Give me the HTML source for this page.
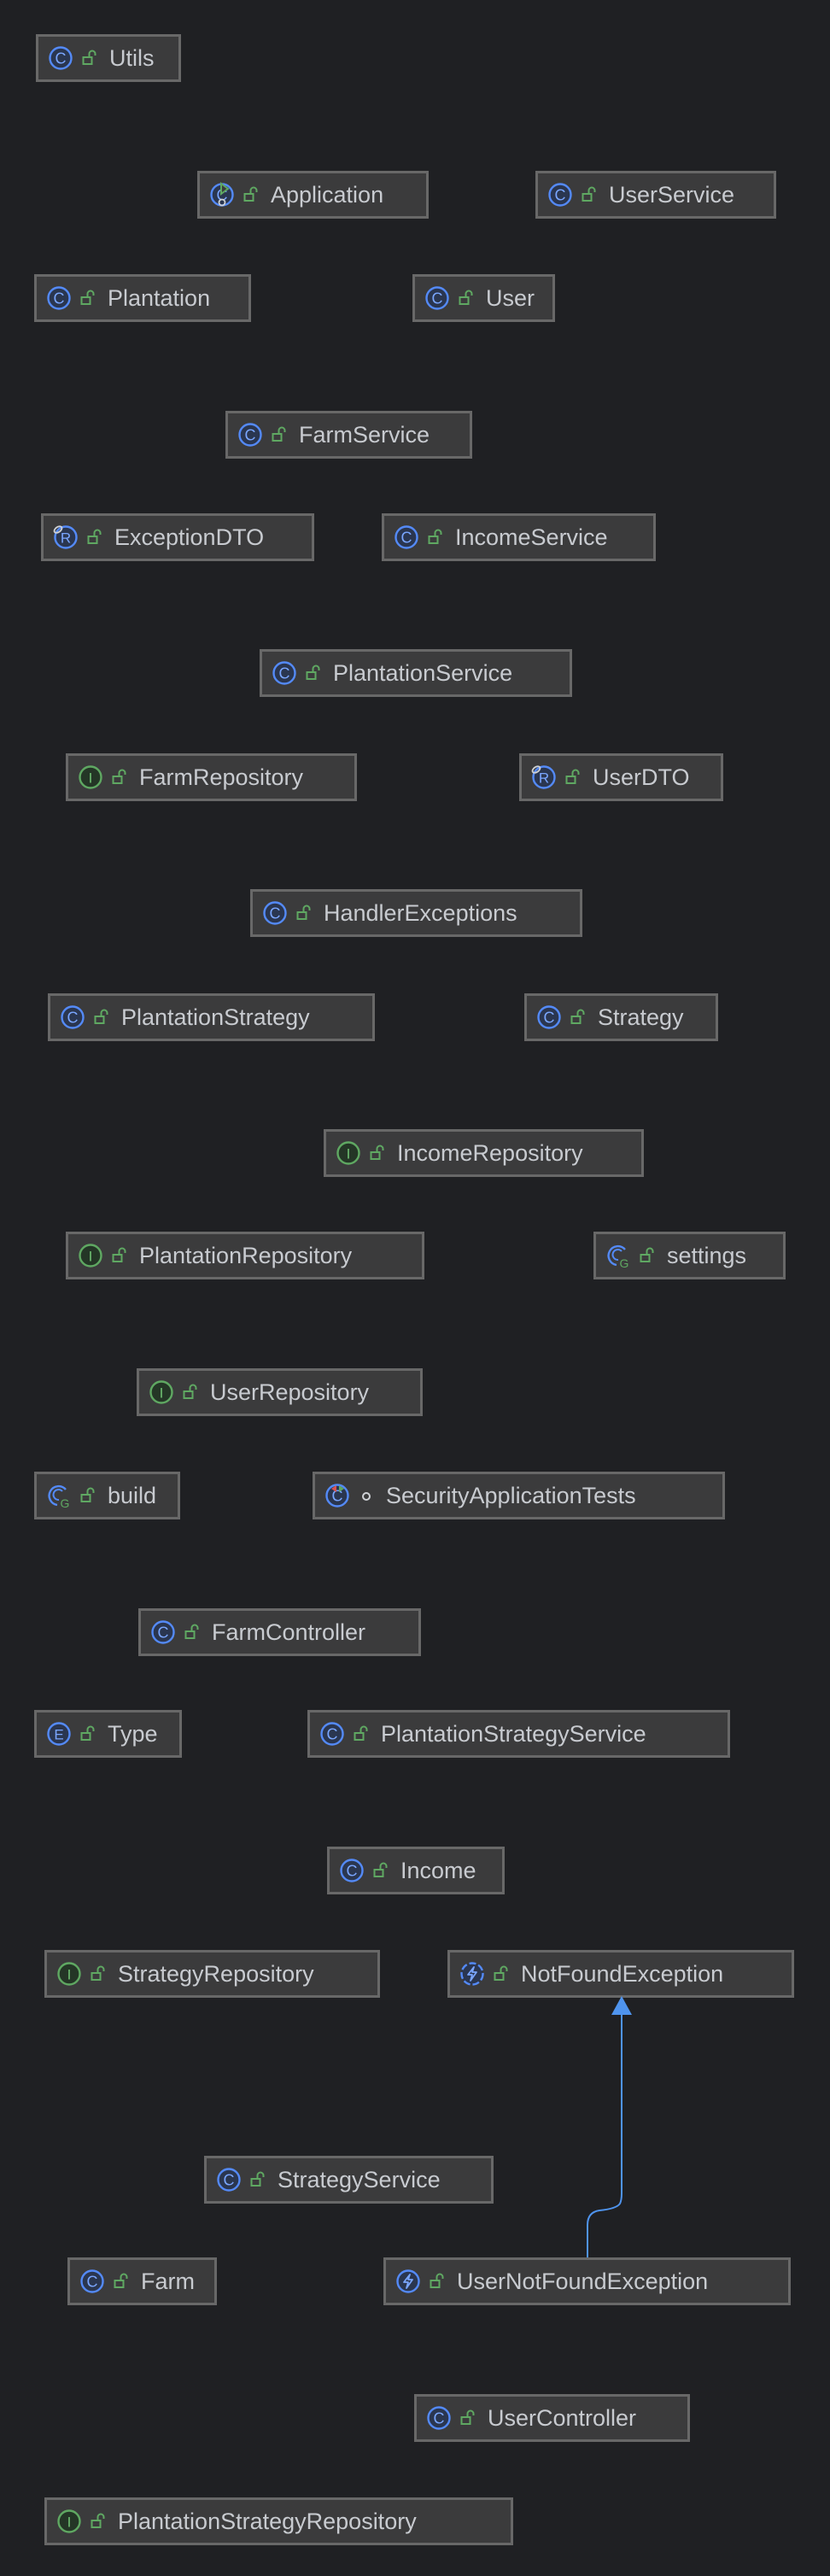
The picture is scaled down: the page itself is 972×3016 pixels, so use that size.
<!DOCTYPE html>
<html><head><meta charset="utf-8"><style>
html,body{margin:0;padding:0;background:#1f2023;width:972px;height:3016px;overflow:hidden;position:relative;font-family:"Liberation Sans",sans-serif}
.b{position:absolute;height:50px;background:#3b3b3c;border:3px solid #686868;box-sizing:content-box;display:flex;align-items:center;color:#c8cbd0;font-size:27px;white-space:nowrap}
.b svg.ic{margin-left:11px;width:30px;height:30px;flex:none}
.b svg.lk{margin-left:10px;width:18px;height:20px;flex:none}
.b span{margin-left:14px}
</style></head><body>
<svg width="0" height="0" style="position:absolute">
<defs>
<g id="c"><circle cx="15" cy="15" r="12.5" fill="#2a3650" stroke="#548af7" stroke-width="2.4"/><text x="15" y="21.5" text-anchor="middle" font-family="Liberation Sans" font-size="18" fill="#7aa6ff">C</text></g>
<g id="i"><circle cx="15" cy="15" r="12.5" fill="#243626" stroke="#5fa862" stroke-width="2.4"/><text x="15" y="21.5" text-anchor="middle" font-family="Liberation Sans" font-size="17" fill="#6fbf72">I</text></g>
<g id="e"><circle cx="15" cy="15" r="12.5" fill="#2a3650" stroke="#548af7" stroke-width="2.4"/><text x="15" y="21.5" text-anchor="middle" font-family="Liberation Sans" font-size="17" fill="#7aa6ff">E</text></g>
<g id="r"><circle cx="15" cy="15" r="12.5" fill="#2a3650" stroke="#548af7" stroke-width="2.4"/><text x="15" y="21.5" text-anchor="middle" font-family="Liberation Sans" font-size="17" fill="#7aa6ff">R</text><ellipse cx="6" cy="6" rx="5" ry="3" transform="rotate(-35 6 6)" fill="none" stroke="#cfd2d6" stroke-width="1.8"/></g>
<g id="x"><circle cx="15" cy="15" r="12.5" fill="#2a3650" stroke="#548af7" stroke-width="2.4"/><path d="M17 7 L10 16 H15 L13 23 L20 13 H15 Z" fill="none" stroke="#7aa6ff" stroke-width="1.8" stroke-linejoin="round"/></g>
<g id="xd"><circle cx="15" cy="15" r="12.5" fill="#2a3650" stroke="#548af7" stroke-width="2.4" stroke-dasharray="8 3"/><path d="M17 7 L10 16 H15 L13 23 L20 13 H15 Z" fill="none" stroke="#7aa6ff" stroke-width="1.8" stroke-linejoin="round"/></g>
<g id="g"><path d="M23 8 A11 11 0 1 0 13 26" fill="none" stroke="#548af7" stroke-width="2.4"/><path d="M19 10 A6 6 0 1 0 15 20" fill="none" stroke="#548af7" stroke-width="2"/><text x="22" y="29" text-anchor="middle" font-family="Liberation Sans" font-size="14" fill="#5fa862">G</text></g>
<g id="a"><use href="#c"/><path d="M14 2 L22 8 L14 14 Z" fill="#3b3b3c" stroke="#5fa862" stroke-width="2"/><circle cx="15" cy="24" r="3.5" fill="none" stroke="#cfd2d6" stroke-width="1.8"/></g>
<g id="t"><use href="#c"/><path d="M14 3 L8 7 L14 11 Z" fill="#d9534f"/><path d="M17 3 L23 7 L17 11 Z" fill="#5fa862"/></g>
<g id="l"><rect x="1.5" y="9" width="10" height="8" fill="none" stroke="#5fa862" stroke-width="2"/><path d="M8.5 9 V5 A3.5 3.5 0 0 1 15.5 5 V7" fill="none" stroke="#5fa862" stroke-width="2"/></g>
<g id="o"><circle cx="9" cy="11" r="4" fill="none" stroke="#cfd2d6" stroke-width="2"/></g>
</defs></svg>

<div class="b" style="left:42px;top:40px;width:164px"><svg class="ic"><use href="#c"/></svg><svg class="lk"><use href="#l"/></svg><span>Utils</span></div>
<div class="b" style="left:231px;top:200px;width:265px"><svg class="ic"><use href="#a"/></svg><svg class="lk"><use href="#l"/></svg><span>Application</span></div>
<div class="b" style="left:627px;top:200px;width:276px"><svg class="ic"><use href="#c"/></svg><svg class="lk"><use href="#l"/></svg><span>UserService</span></div>
<div class="b" style="left:40px;top:321px;width:248px"><svg class="ic"><use href="#c"/></svg><svg class="lk"><use href="#l"/></svg><span>Plantation</span></div>
<div class="b" style="left:483px;top:321px;width:161px"><svg class="ic"><use href="#c"/></svg><svg class="lk"><use href="#l"/></svg><span>User</span></div>
<div class="b" style="left:264px;top:481px;width:283px"><svg class="ic"><use href="#c"/></svg><svg class="lk"><use href="#l"/></svg><span>FarmService</span></div>
<div class="b" style="left:48px;top:601px;width:314px"><svg class="ic"><use href="#r"/></svg><svg class="lk"><use href="#l"/></svg><span>ExceptionDTO</span></div>
<div class="b" style="left:447px;top:601px;width:315px"><svg class="ic"><use href="#c"/></svg><svg class="lk"><use href="#l"/></svg><span>IncomeService</span></div>
<div class="b" style="left:304px;top:760px;width:360px"><svg class="ic"><use href="#c"/></svg><svg class="lk"><use href="#l"/></svg><span>PlantationService</span></div>
<div class="b" style="left:77px;top:882px;width:335px"><svg class="ic"><use href="#i"/></svg><svg class="lk"><use href="#l"/></svg><span>FarmRepository</span></div>
<div class="b" style="left:608px;top:882px;width:233px"><svg class="ic"><use href="#r"/></svg><svg class="lk"><use href="#l"/></svg><span>UserDTO</span></div>
<div class="b" style="left:293px;top:1041px;width:383px"><svg class="ic"><use href="#c"/></svg><svg class="lk"><use href="#l"/></svg><span>HandlerExceptions</span></div>
<div class="b" style="left:56px;top:1163px;width:377px"><svg class="ic"><use href="#c"/></svg><svg class="lk"><use href="#l"/></svg><span>PlantationStrategy</span></div>
<div class="b" style="left:614px;top:1163px;width:221px"><svg class="ic"><use href="#c"/></svg><svg class="lk"><use href="#l"/></svg><span>Strategy</span></div>
<div class="b" style="left:379px;top:1322px;width:369px"><svg class="ic"><use href="#i"/></svg><svg class="lk"><use href="#l"/></svg><span>IncomeRepository</span></div>
<div class="b" style="left:77px;top:1442px;width:414px"><svg class="ic"><use href="#i"/></svg><svg class="lk"><use href="#l"/></svg><span>PlantationRepository</span></div>
<div class="b" style="left:695px;top:1442px;width:219px"><svg class="ic"><use href="#g"/></svg><svg class="lk"><use href="#l"/></svg><span>settings</span></div>
<div class="b" style="left:160px;top:1602px;width:329px"><svg class="ic"><use href="#i"/></svg><svg class="lk"><use href="#l"/></svg><span>UserRepository</span></div>
<div class="b" style="left:40px;top:1723px;width:165px"><svg class="ic"><use href="#g"/></svg><svg class="lk"><use href="#l"/></svg><span>build</span></div>
<div class="b" style="left:366px;top:1723px;width:477px"><svg class="ic"><use href="#t"/></svg><svg class="lk"><use href="#o"/></svg><span>SecurityApplicationTests</span></div>
<div class="b" style="left:162px;top:1883px;width:325px"><svg class="ic"><use href="#c"/></svg><svg class="lk"><use href="#l"/></svg><span>FarmController</span></div>
<div class="b" style="left:40px;top:2002px;width:167px"><svg class="ic"><use href="#e"/></svg><svg class="lk"><use href="#l"/></svg><span>Type</span></div>
<div class="b" style="left:360px;top:2002px;width:489px"><svg class="ic"><use href="#c"/></svg><svg class="lk"><use href="#l"/></svg><span>PlantationStrategyService</span></div>
<div class="b" style="left:383px;top:2162px;width:202px"><svg class="ic"><use href="#c"/></svg><svg class="lk"><use href="#l"/></svg><span>Income</span></div>
<div class="b" style="left:52px;top:2283px;width:387px"><svg class="ic"><use href="#i"/></svg><svg class="lk"><use href="#l"/></svg><span>StrategyRepository</span></div>
<div class="b" style="left:524px;top:2283px;width:400px"><svg class="ic"><use href="#xd"/></svg><svg class="lk"><use href="#l"/></svg><span>NotFoundException</span></div>
<div class="b" style="left:239px;top:2524px;width:333px"><svg class="ic"><use href="#c"/></svg><svg class="lk"><use href="#l"/></svg><span>StrategyService</span></div>
<div class="b" style="left:79px;top:2643px;width:169px"><svg class="ic"><use href="#c"/></svg><svg class="lk"><use href="#l"/></svg><span>Farm</span></div>
<div class="b" style="left:449px;top:2643px;width:471px"><svg class="ic"><use href="#x"/></svg><svg class="lk"><use href="#l"/></svg><span>UserNotFoundException</span></div>
<div class="b" style="left:485px;top:2803px;width:317px"><svg class="ic"><use href="#c"/></svg><svg class="lk"><use href="#l"/></svg><span>UserController</span></div>
<div class="b" style="left:52px;top:2924px;width:543px"><svg class="ic"><use href="#i"/></svg><svg class="lk"><use href="#l"/></svg><span>PlantationStrategyRepository</span></div>

<svg style="position:absolute;left:0;top:0" width="972" height="3016">
<path d="M688 2643 V2605 Q688 2590 702 2588 Q722 2586 726 2580 Q728 2576 728 2568 V2358" fill="none" stroke="#4f94ee" stroke-width="2"/>
<path d="M728 2337 L740 2359 L716 2359 Z" fill="#4f94ee"/>
</svg>
</body></html>
